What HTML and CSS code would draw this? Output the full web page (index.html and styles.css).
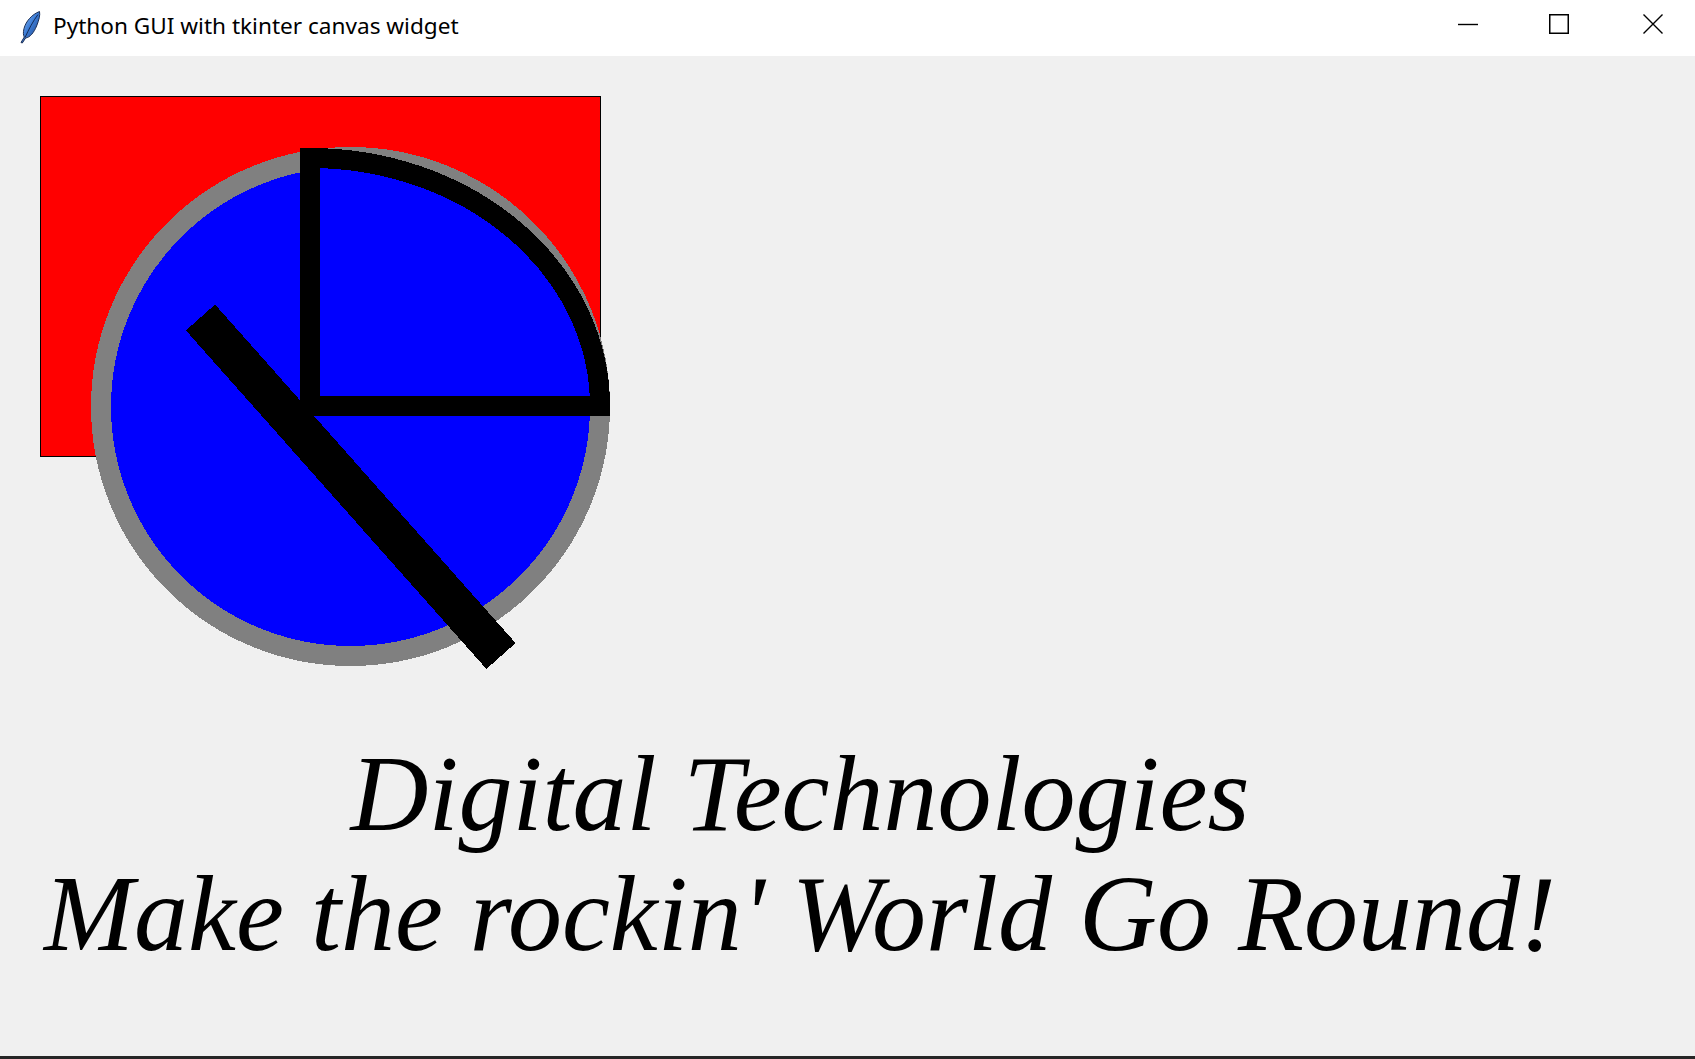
FILE: index.html
```html
<!DOCTYPE html>
<html>
<head>
<meta charset="utf-8">
<title>Python GUI with tkinter canvas widget</title>
<link rel="stylesheet" href="styles.css">
</head>
<body>
<div class="window">
  <header class="titlebar">
    <div class="title-left">
      <svg class="app-icon" width="22" height="34" viewBox="0 0 22 34">
        <defs>
          <linearGradient id="fg" x1="0" y1="0" x2="1" y2="1">
            <stop offset="0" stop-color="#a8cdf5"/>
            <stop offset="0.45" stop-color="#3f7fd8"/>
            <stop offset="1" stop-color="#17397a"/>
          </linearGradient>
        </defs>
        <path d="M20.5 1.5 C13 4.5 7 11 5 18.5 C4 22.5 4.3 25.5 5.3 27 L2 32.5 L3.3 33 L6.6 28 C11 27.5 15 22.5 17.6 16 C20 10 21.3 5 20.5 1.5 Z" fill="url(#fg)" stroke="#1c2f55" stroke-width="1"/>
        <path d="M19 4.5 C14 11 10 19 6 27.5" fill="none" stroke="#0f2248" stroke-width="0.9"/>
      </svg>
      <span class="title-text">Python GUI with tkinter canvas widget</span>
    </div>
    <div class="controls">
      <div class="ctl">
        <svg width="22" height="22" viewBox="0 0 22 22"><line x1="1" y1="11.5" x2="21" y2="11.5" stroke="#000" stroke-width="1.4"/></svg>
      </div>
      <div class="ctl">
        <svg width="22" height="22" viewBox="0 0 22 22"><rect x="1.75" y="1.75" width="18.5" height="18.5" fill="none" stroke="#000" stroke-width="1.5"/></svg>
      </div>
      <div class="ctl ctl-close">
        <svg width="22" height="22" viewBox="0 0 22 22"><path d="M1.5 1.5 L20.5 20.5 M20.5 1.5 L1.5 20.5" stroke="#000" stroke-width="1.4"/></svg>
      </div>
    </div>
  </header>
  <main class="canvas">
    <svg class="drawing" width="1695" height="678" viewBox="0 0 1695 678" shape-rendering="crispEdges">
      <rect x="40.5" y="40.5" width="560" height="360" fill="#ff0000" stroke="#000000" stroke-width="1"/>
      <circle cx="350.5" cy="350.5" r="249.5" fill="#0000ff" stroke="#808080" stroke-width="20"/>
      <path d="M310 350 L600 350 A290 248 0 0 0 310 102 Z" fill="#0000ff" stroke="#000000" stroke-width="20" stroke-linejoin="miter"/>
      <line x1="200.5" y1="261.5" x2="501" y2="600" stroke="#000000" stroke-width="39"/>
    </svg>
    <div class="caption">
      <div class="line">Digital Technologies</div>
      <div class="line">Make the rockin' World Go Round!</div>
    </div>
  </main>
  <footer class="taskbar-edge"></footer>
</div>
</body>
</html>
```
FILE: styles.css
```css
html, body {
  margin: 0;
  padding: 0;
}
body {
  width: 1695px;
  height: 1059px;
  overflow: hidden;
  background: #f0f0f0;
}
.window {
  display: flex;
  flex-direction: column;
  height: 1059px;
}
.titlebar {
  height: 56px;
  flex: 0 0 56px;
  background: #ffffff;
  display: flex;
  align-items: center;
  justify-content: space-between;
}
.title-left {
  display: flex;
  align-items: center;
  padding-left: 19px;
  gap: 12px;
}
.app-icon {
  display: block;
  margin-top: -3px;
}
.title-text {
  font-family: "Segoe UI", "Noto Sans", "Open Sans", sans-serif;
  font-size: 22.6px;
  color: #000;
  margin-top: -6px;
}
.controls {
  display: flex;
  height: 56px;
}
.ctl {
  box-sizing: border-box;
  width: 91px;
  display: flex;
  align-items: center;
  justify-content: center;
  padding-bottom: 9px;
}
.ctl-close svg {
  margin-left: 6px;
}
.ctl svg {
  display: block;
}
.canvas {
  flex: 1 1 auto;
  background: #f0f0f0;
  display: flex;
  flex-direction: column;
}
.drawing {
  display: block;
  flex: 0 0 auto;
}
.caption {
  width: 1600px;
  text-align: center;
  font-family: "Liberation Serif", "Times New Roman", serif;
  font-style: italic;
  font-size: 108px;
  line-height: 120px;
  color: #000;
  white-space: nowrap;
}
.taskbar-edge {
  height: 3px;
  flex: 0 0 3px;
  background: #262626;
}
```
